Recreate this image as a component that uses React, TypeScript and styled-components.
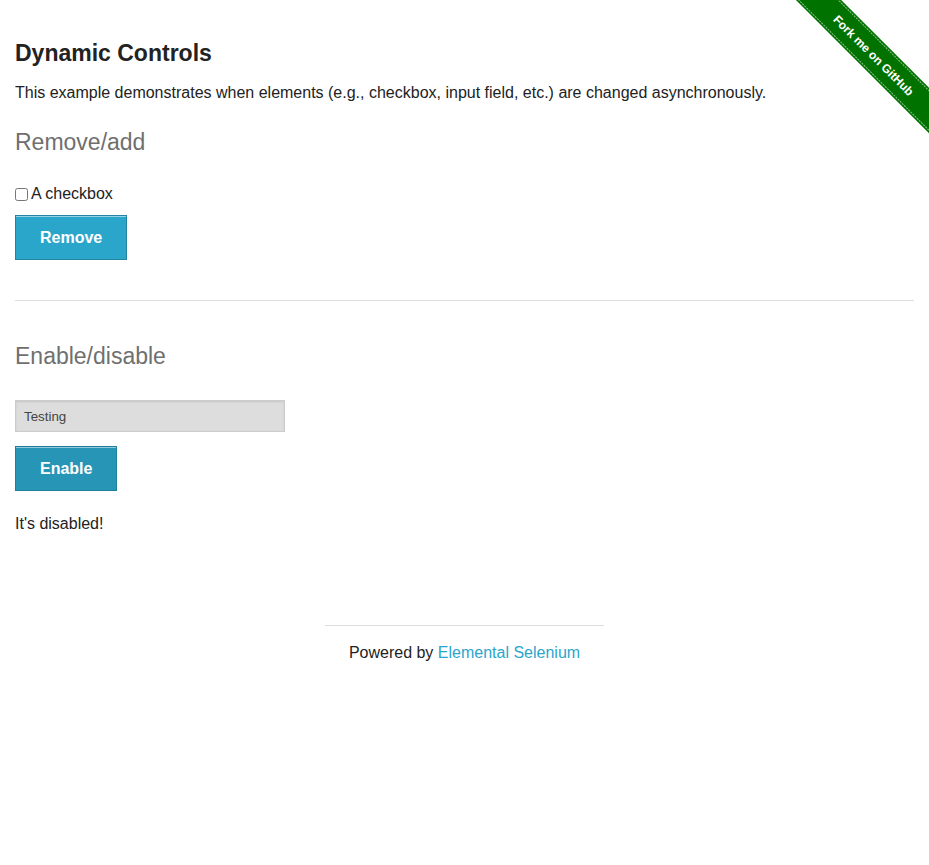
import React from "react";
import styled, { createGlobalStyle } from "styled-components";

const GlobalStyle = createGlobalStyle`
  html, body { margin: 0; padding: 0; background: #fff; }
  body {
    font-family: "Liberation Sans", Arial, Helvetica, sans-serif;
    color: #222;
    font-size: 16px;
  }
  * { box-sizing: border-box; }
`;

const Page = styled.div`
  position: relative;
  min-height: 865px;
  overflow: hidden;
`;

const Content = styled.div`
  padding: 39px 15px 0;
  display: flex;
  flex-direction: column;
  align-items: flex-start;
`;

const Title = styled.h3`
  margin: 0;
  font-size: 23px;
  line-height: 28px;
  font-weight: bold;
  color: #222;
`;

const Lead = styled.p`
  margin: 16px 0 0;
  font-size: 16px;
  line-height: 20px;
`;

const SectionTitle = styled.h4<{ $top: number }>`
  margin: ${(p) => p.$top}px 0 0;
  font-size: 23px;
  line-height: 28px;
  font-weight: normal;
  color: #6f6f6f;
`;

const CheckRow = styled.div`
  margin-top: 28px;
  display: flex;
  align-items: center;
  height: 20px;
  font-size: 16px;
  line-height: 20px;
`;

const Check = styled.input`
  width: 13px;
  height: 13px;
  margin: 0 3px 0 0;
`;

const Button = styled.button<{ $top: number; $dark?: boolean }>`
  margin-top: ${(p) => p.$top}px;
  height: 45px;
  padding: 0 24px;
  font-family: "Liberation Sans", Arial, sans-serif;
  font-weight: bold;
  font-size: 16px;
  color: #fff;
  background: ${(p) => (p.$dark ? "#2795b6" : "#2ba6cb")};
  border: 1px solid ${(p) => (p.$dark ? "#1e7f9c" : "#2284a1")};
  box-shadow: inset 0 1px 0 rgba(255, 255, 255, 0.5);
  cursor: pointer;
`;

const Rule = styled.hr`
  align-self: stretch;
  margin: 40px 0 0;
  border: 0;
  border-top: 1px solid #ddd;
  height: 0;
`;

const TextInput = styled.input`
  margin-top: 30px;
  width: 270px;
  height: 32px;
  padding: 0 8px;
  font-family: "Liberation Sans", Arial, sans-serif;
  font-size: 13.33px;
  color: #444;
  background: #ddd;
  border: 1px solid #ccc;
  box-shadow: inset 0 1px 2px rgba(0, 0, 0, 0.1);
`;

const Message = styled.p`
  margin: 23px 0 0;
  font-size: 16px;
  line-height: 20px;
`;

const Footer = styled.footer`
  margin: 91px auto 0;
  width: 279px;
  border-top: 1px solid #ddd;
  padding-top: 17px;
  text-align: center;
  font-size: 16px;
  line-height: 20px;
`;

const Link = styled.a`
  color: #2ba6cb;
  text-decoration: none;
`;

const Ribbon = styled.svg`
  position: absolute;
  top: 0;
  right: 0;
`;

export default function App() {
  return (
    <Page>
      <GlobalStyle />
      <Content>
        <Title>Dynamic Controls</Title>
        <Lead>
          This example demonstrates when elements (e.g., checkbox, input field, etc.) are changed
          asynchronously.
        </Lead>
        <SectionTitle $top={25}>Remove/add</SectionTitle>
        <CheckRow>
          <Check type="checkbox" />
          <span>A checkbox</span>
        </CheckRow>
        <Button $top={11}>Remove</Button>
        <Rule />
        <SectionTitle $top={41}>Enable/disable</SectionTitle>
        <TextInput disabled defaultValue="Testing" />
        <Button $top={14} $dark>
          Enable
        </Button>
        <Message>It's disabled!</Message>
      </Content>
      <Footer>
        Powered by <Link href="#">Elemental Selenium</Link>
      </Footer>
      <Ribbon width="149" height="149" viewBox="0 0 149 149">
        <g transform="translate(93.75 55.25) rotate(45)">
          <rect x="-120" y="-16" width="240" height="32" fill="#007200" />
          <line x1="-120" y1="-14" x2="120" y2="-14" stroke="rgba(255,255,255,0.55)" strokeWidth="1" strokeDasharray="2 1" />
          <line x1="-120" y1="14" x2="120" y2="14" stroke="rgba(255,255,255,0.55)" strokeWidth="1" strokeDasharray="2 1" />
          <text
            x="0"
            y="4.5"
            textAnchor="middle"
            fill="#fff"
            fontFamily="'Liberation Sans', Arial, sans-serif"
            fontWeight="bold"
            fontSize="12"
          >
            Fork me on GitHub
          </text>
        </g>
      </Ribbon>
    </Page>
  );
}
